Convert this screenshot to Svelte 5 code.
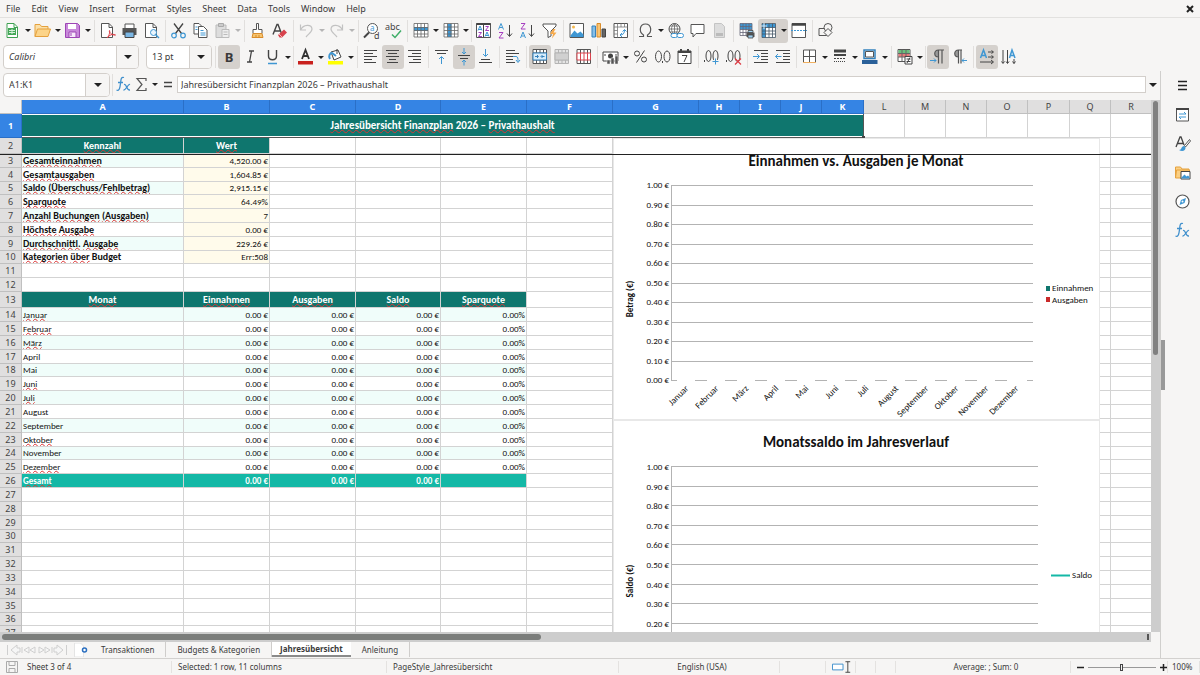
<script>
  const menus = ['File', 'Edit', 'View', 'Insert', 'Format', 'Styles', 'Sheet', 'Data', 'Tools', 'Window', 'Help'];

  const lines = (list) => `<path d="${list.map(([x, y, w]) => `M${x} ${y}h${w}`).join('')}" stroke="#444" fill="none"/>`;

  const icons = {
    new: `<path d="M3 1.500h7l3.500 3.500v10.500h-10.500z" fill="#fff" stroke="#3fa152"/><path d="M10 1.500v4h4" fill="none" stroke="#3fa152"/><path d="M4 6h8v7h-8z" fill="#43a857"/><path d="M5 8.500h6M5 10.500h6M8 7v5" stroke="#d5f0da"/>`,
    open: `<path d="M1 14.500v-12h5l1.500 2h6.500v3" fill="#fbe0a8" stroke="#e5a13d"/><path d="M1 14.500l2.500-7.500h13l-2.500 7.500z" fill="#fcd489" stroke="#e5a13d"/>`,
    save: `<path d="M1.500 1.500h12l2 2v12h-14z" fill="#c888da" stroke="#9d45b5"/><path d="M4 2h8v5h-8z" fill="#fff"/><path d="M5 10h7v5.500h-7z" fill="#f7e9fb" stroke="#9d45b5"/><path d="M7 11v3" stroke="#9d45b5"/>`,
    pdf: `<path d="M2.500 1.500h7.500l3.500 3.500v10.500h-11z" fill="#fff" stroke="#555"/><path d="M10 1.500v4h3.500" fill="none" stroke="#555"/><path d="M8 16c3-3 3-8 2.500-7.500c-1 1 2 5 6 4.500c-3-1.500-6 0-8.500 3" fill="none" stroke="#dd3b44"/>`,
    print: `<path d="M4 6v-4h9v4" fill="#fff" stroke="#555"/><path d="M1.500 6h14v7h-14z" fill="#555"/><path d="M4 10h9v5.500h-9z" fill="#7cb7e4" stroke="#444"/>`,
    preview: `<path d="M2.500 1.500h7.500l3.500 3.500v10.500h-11z" fill="#fff" stroke="#555"/><path d="M10 1.500v4h3.500" fill="none" stroke="#555"/><circle cx="10.500" cy="10.500" r="3" fill="#eaf5fd" stroke="#3f97d3"/><path d="M12.500 12.500l3.500 3.500" stroke="#3f97d3" stroke-width="1.500"/>`,
    cut: `<path d="M4 1.500l7.500 10M13 1.500l-7.500 10" stroke="#444" stroke-width="1.300"/><circle cx="4" cy="13.500" r="2.300" fill="none" stroke="#3f97d3" stroke-width="1.200"/><circle cx="13" cy="13.500" r="2.300" fill="none" stroke="#3f97d3" stroke-width="1.200"/>`,
    copy: `<path d="M2 1.500h5l3 3v7.500h-8z" fill="#fff" stroke="#555"/><path d="M6.500 4.500h5l3.500 3.500v7.500h-8.500z" fill="#fff" stroke="#555"/><path d="M3.500 5h2M3.500 7.500h2M8.500 8.500h3M8.500 11h5M8.500 13h5" stroke="#3f97d3"/>`,
    paste: `<path d="M2 3h10v12.500h-10z" fill="#ddd" stroke="#bbb"/><path d="M4.500 1.500h5v3h-5z" fill="#ccc" stroke="#aaa"/><path d="M8 7.500h7v8h-7z" fill="#eee" stroke="#bbb"/><path d="M9.500 10h4M9.500 12.500h4" stroke="#bbb"/>`,
    brush: `<path d="M7.500 1.500h2v6h3.500v4h-9v-4h3.500z" fill="#fff" stroke="#555"/><path d="M4 11.500h9l1 4h-11z" fill="#f6c46f" stroke="#d98c2b"/><path d="M7 13v2M10 13v2" stroke="#d98c2b"/>`,
    clear: `<path d="M2 12.500l4-10h1l3.500 9M3.500 9h6" fill="none" stroke="#444" stroke-width="1.400"/><path d="M7 13l6-5.500l3 3l-5 5h-2.500z" fill="#d8434d"/><path d="M8 12l3 3" stroke="#f6b4b8"/>`,
    undo: `<path d="M2.500 2.500v5.500h5.500M2.500 8c3-6 11-6 11.500-1c0 3-3 4.500-6 8" fill="none" stroke="#c2c2c2" stroke-width="1.200"/>`,
    redo: `<path d="M14.500 2.500v5.500h-5.500M14.500 8c-3-6-11-6-11.500-1c0 3 3 4.500 6 8" fill="none" stroke="#c2c2c2" stroke-width="1.200"/>`,
    find: `<circle cx="9.500" cy="6.500" r="5" fill="#fff" stroke="#555"/><path d="M6 10.500l-5 5" stroke="#444" stroke-width="2"/><text x="7" y="9" font-size="8" fill="#3f97d3">a</text><text x="11" y="16.500" font-size="9" fill="#444">d</text>`,
    spell: `<text x="0" y="8" font-size="9" fill="#444">abc</text><path d="M7 12.500l3 3l6-7" fill="none" stroke="#3fae68" stroke-width="1.500"/>`,
    row: `<path d="M2 2h14v13h-14z" fill="#fff"/><path d="M2 5h14v4h-14z" fill="#3f97d3"/><path d="M2 1.500h14v13.500h-14zM2 5.500h14M2 8.500h14M2 12h14M5.500 1.500v13.500M9 1.500v13.500M12.500 1.500v13.500" fill="none" stroke="#666" stroke-width=".8"/>`,
    col: `<path d="M2 2h14v13h-14z" fill="#fff"/><path d="M5.500 2h4v13h-4z" fill="#3f97d3"/><path d="M2 1.500h14v13.500h-14zM2 5h14M2 8.500h14M2 12h14M5.500 1.500v13.500M9 1.500v13.500M12.500 1.500v13.500" fill="none" stroke="#666" stroke-width=".8"/>`,
    sort: `<path d="M1.500 1.500h14v14h-14z" fill="#fff" stroke="#555"/><path d="M1.500 2h14" stroke="#444" stroke-width="2"/><path d="M8.500 2v13" stroke="#444"/><path d="M3 8.500l2-4.500l2 4.500M3.500 7.500h3M10 14.500l2-4.500l2 4.500M10.500 13.500h3" fill="none" stroke="#3f97d3"/><path d="M3.500 10.500h3l-3 4h3.500M10.500 4.500h3l-3 4h3.500" fill="none" stroke="#a63fc0"/>`,
    az: `<path d="M1.500 7.500l2.500-6l2.500 6M2.500 5.500h3" fill="none" stroke="#3f97d3"/><path d="M2 10.500h4l-4 5.500h4.500" fill="none" stroke="#a63fc0"/><path d="M12.500 3v11M10 11.500l2.500 3l2.500-3" fill="none" stroke="#444"/>`,
    za: `<path d="M1.500 16l2.500-6l2.500 6M2.500 14h3" fill="none" stroke="#3f97d3"/><path d="M2 1.500h4l-4 5.500h4.500" fill="none" stroke="#a63fc0"/><path d="M12.500 3v11M10 11.500l2.500 3l2.500-3" fill="none" stroke="#444"/>`,
    filter: `<path d="M2 2h13v2l-5 5v5l-3 1.500v-6.500l-5-5z" fill="#fff" stroke="#555"/><path d="M12 7l-3 5h3l-1 4.500l4.500-6h-3l2-3.500z" fill="#f5a94b"/>`,
    image: `<path d="M2 1.500h13.500v14h-13.500z" fill="#fff" stroke="#555"/><path d="M2.500 13.500l4-5l3 3l3-2l3 3v2.500h-13z" fill="#3f97d3"/><circle cx="5.500" cy="5" r="1.500" fill="#f5b84b"/>`,
    chart: `<path d="M2 4h3.500v11h-3.500z" fill="#86bfe8" stroke="#3582bd"/><path d="M7 1.500h3.500v13.500h-3.500z" fill="#f9c574" stroke="#d98c2b"/><path d="M12 7h3.500v8h-3.500z" fill="#666" stroke="#444"/>`,
    pivot: `<path d="M2 1.500h13.500v14h-13.500z" fill="#fff" stroke="#555"/><path d="M2 5h13.500M5.500 1.500v14M9 1.500v3.500M12.500 1.500v3.500M2 8.500h3.500M2 12h3.500" stroke="#777" stroke-width=".8"/><path d="M8 13c3 0 4.500-1.500 4.500-5M8 13l2-2M8 13l2 2M12.500 7.500l-2 2M12.500 7.500l2 2" fill="none" stroke="#3f97d3"/>`,
    omega: `<path d="M2 14.500h4.500v-1.500c-5-3-4-11 2-11s7 8 2 11v1.500h4.500" fill="none" stroke="#555" stroke-width="1.200"/>`,
    link: `<circle cx="7.500" cy="7" r="5.500" fill="#fff" stroke="#555"/><path d="M2 7h11M7.500 1.500v11M3 4h9M3 10h9M7.500 1.500c-4 3-4 8 0 11M7.500 1.500c4 3 4 8 0 11" fill="none" stroke="#666" stroke-width=".8"/><rect x="4" y="11.500" width="6.500" height="4" rx="2" fill="#fff" stroke="#3f97d3"/><rect x="10" y="11.500" width="6.500" height="4" rx="2" fill="#fff" stroke="#3f97d3"/>`,
    comment: `<path d="M2 2.500h13v9h-8l-3 3.500v-3.500h-2z" fill="#fff" stroke="#555"/>`,
    header: `<path d="M3.500 1.500h7l3 3v11h-10z" fill="#ddd" stroke="#c4c4c4"/><path d="M5 11h7v3h-7z" fill="#bbb"/>`,
    area: `<path d="M2 1.500h12v12h-12z" fill="#fff"/><path d="M2 1.500h12v6h-12z" fill="#3f97d3"/><path d="M2 1.500h12v12h-12zM2 4.500h12M2 7.500h12M2 10.500h12M5 1.500v12M8 1.500v12M11 1.500v12" fill="none" stroke="#667" stroke-width=".8"/><path d="M8.500 10.500h8v4.500h-8z" fill="#555"/><path d="M10 8.500h5v2h-5zM10 13h5v3h-5z" fill="#9fd0f0" stroke="#444" stroke-width=".8"/>`,
    freeze: `<path d="M2 2h13.500v13.500h-13.500z" fill="#fff"/><path d="M2 2h13.500v3.500h-10v10h-3.500z" fill="#3f97d3"/><path d="M2 1.500h13.500v14h-13.500zM2 5.500h13.500M2 9h13.500M2 12h13.500M5.500 1.500v14M9 1.500v14M12.500 1.500v14" fill="none" stroke="#456" stroke-width=".8"/><path d="M1 4h6M4 1v6" stroke="#cfe6f7"/>`,
    split: `<path d="M2 1.500h13.500v14h-13.500z" fill="#fff" stroke="#555"/><path d="M2 2.500h14" stroke="#444" stroke-width="2.500"/><path d="M1 8.500h16" stroke="#3f97d3" stroke-dasharray="2 1"/>`,
    shapes: `<path d="M2 6.500h7.500v7h-7.500z" fill="none" stroke="#555"/><circle cx="11" cy="5.500" r="4" fill="#f6f5f4" stroke="#555"/><path d="M11 6.500l4 4l-4 4l-4-4z" fill="#f6f5f4" stroke="#555"/>`,
    italic: `<path d="M7 3h5M5 14h5M9.500 3l-2 11" fill="none" stroke="#444" stroke-width="1.300"/>`,
    under: `<path d="M4.500 2v6c0 5 8 5 8 0v-6" fill="none" stroke="#444" stroke-width="1.400"/><path d="M4 15.500h9" stroke="#3f97d3" stroke-width="1.500"/>`,
    fcolor: `<path d="M5 11l3.500-9l3.500 9M6 8h5" fill="none" stroke="#333" stroke-width="1.800"/><path d="M1 13h15v3.500h-15z" fill="#c9211e"/>`,
    hilite: `<path d="M4 4l7-2l3 7l-7 3z" fill="#fff" stroke="#444"/><path d="M3 11c-2-3 0-6 2-6l4 3" fill="none" stroke="#3f97d3" stroke-width="2"/><path d="M10 1v5" stroke="#444"/><path d="M1 13h15v3.500h-15z" fill="#ffff00"/>`,
    left: lines([[2, 2.5, 13], [2, 5.5, 9], [2, 8.5, 13], [2, 11.5, 8], [2, 14.5, 12]]),
    center: lines([[2, 2.5, 13], [4, 5.5, 9], [2, 8.5, 13], [5, 11.5, 7], [3, 14.5, 11]]),
    right: lines([[2, 2.5, 13], [6, 5.5, 9], [2, 8.5, 13], [7, 11.5, 8], [3, 14.5, 12]]),
    top: `${lines([[2, 2.5, 13], [4, 5.5, 9]])}<path d="M8.500 16v-7M6 11l2.500-2.500l2.500 2.500" fill="none" stroke="#3f97d3"/>`,
    middle: `${lines([[3, 7.5, 12], [5, 10.5, 8]])}<path d="M9 0v5.500M7 4l2 2l2-2M9 17.500v-5M7 14l2-2l2 2" fill="none" stroke="#3f97d3"/>`,
    bottom: `${lines([[2, 14.5, 13], [4, 11.5, 9]])}<path d="M8.500 1v7M6 6l2.500 2.500l2.500-2.500" fill="none" stroke="#3f97d3"/>`,
    wrap: `${lines([[2, 2.5, 9], [2, 5.5, 13], [2, 8.5, 7], [2, 11.5, 7], [2, 14.5, 9]])}<path d="M9 8.500h3c2 0 2 2 2 5M12 12l2 2.500l2-2.500" fill="none" stroke="#3f97d3"/>`,
    merge: `<path d="M2 2h14v13h-14z" fill="#fff"/><path d="M2 1.500h13.500v14h-13.500zM2 5h13.500M2 12h13.500M5.500 1.500v3.500M9 1.500v3.500M12.500 1.500v3.500M5.500 12v3.500M9 12v3.500M12.500 12v3.500" fill="none" stroke="#555"/><path d="M2 5h13.500v7h-13.500z" fill="#d7ecfa" stroke="#3582bd"/><path d="M4 8.500h3M10.500 8.500h3M6 7l1.500 1.500l-1.500 1.500M11.500 7l-1.500 1.500l1.500 1.500" fill="none" stroke="#3582bd"/>`,
    merge2: `<path d="M2 1.500h13.500v14h-13.500zM2 5h13.500M2 12h13.500M5.500 1.500v3.500M9 1.500v3.500M12.500 1.500v3.500M5.500 12v3.500M9 12v3.500M12.500 12v3.500" fill="#e4e4e4" stroke="#b4b4b4"/><path d="M2 5h13.500v7h-13.500z" fill="#d0d0d0" stroke="#b4b4b4"/>`,
    unmerge: `<path d="M2 1.500h13.500v14h-13.500zM5.500 1.500v14M9 1.500v14M12.500 1.500v14" fill="#fff" stroke="#555"/><path d="M2 5h13.500v7h-13.500zM5.500 5v7M9 5v7M12.500 5v7" fill="#fff" stroke="#d8434d"/>`,
    currency: `<path d="M1 4h15v9h-15z" fill="#fff" stroke="#444"/><circle cx="8.500" cy="8" r="2.500" fill="#444"/><path d="M3 6v2M14 6v2" stroke="#444"/><path d="M5 12h3v4h-3zM9 10h3v6h-3zM13 8h3v8h-3z" fill="#555" stroke="#eee" stroke-width=".5"/>`,
    percent: `<circle cx="5" cy="5.500" r="2.500" fill="none" stroke="#444"/><circle cx="12" cy="11.500" r="2.500" fill="none" stroke="#444"/><path d="M12.500 2.500l-8 12" stroke="#444"/>`,
    number: `<ellipse cx="4.500" cy="8.500" rx="3" ry="5.500" fill="none" stroke="#444"/><ellipse cx="13" cy="8.500" rx="3" ry="5.500" fill="none" stroke="#444"/><path d="M8.500 13v2" stroke="#444"/>`,
    date: `<path d="M2 3h13v12.500h-13z" fill="#fff" stroke="#444"/><path d="M2 4h13M5 1v3M12 1v3" stroke="#444" stroke-width="2"/><path d="M6 7.500h5l-3 6.500" fill="none" stroke="#444"/>`,
    adddec: `<ellipse cx="5.500" cy="8" rx="2.500" ry="5.500" fill="none" stroke="#444"/><ellipse cx="12.500" cy="8" rx="2.500" ry="5.500" fill="none" stroke="#444"/><path d="M1.500 12v2" stroke="#444"/><path d="M9 13.500h7M12.500 10v7" stroke="#f6f5f4" stroke-width="3"/><path d="M9.500 13.500h6M12.500 10.500v6" stroke="#3f97d3"/>`,
    deldec: `<ellipse cx="5.500" cy="8" rx="2.500" ry="5.500" fill="none" stroke="#444"/><ellipse cx="12.500" cy="8" rx="2.500" ry="5.500" fill="none" stroke="#444"/><path d="M1.500 12v2" stroke="#444"/><path d="M10 10.500l6 6M16 10.500l-6 6" stroke="#dd3b44" stroke-width="1.200"/>`,
    indent: `${lines([[2, 2.5, 14], [9, 5.5, 7], [9, 8.5, 7], [9, 11.5, 7], [2, 14.5, 14]])}<path d="M1 8.500h6M5 6l2.500 2.500l-2.500 2.500" fill="none" stroke="#3f97d3"/>`,
    outdent: `${lines([[2, 2.5, 14], [9, 5.5, 7], [9, 8.5, 7], [9, 11.5, 7], [2, 14.5, 14]])}<path d="M7.500 8.500h-6M4 6l-2.500 2.500l2.500 2.500" fill="none" stroke="#3f97d3"/>`,
    borders: `<path d="M2.500 2h12v12.500h-12zM8.500 2v12.500M2.500 8.500h12" fill="#fff" stroke="#555"/><path d="M2 14.500h13" stroke="#f0b060"/>`,
    lstyle: `<path d="M3 3h12" stroke="#444" stroke-width="3"/><path d="M3 7h12" stroke="#444" stroke-width="2"/><path d="M3 10.500h12" stroke="#444" stroke-dasharray="2 1"/><path d="M3 13.500h12" stroke="#444" stroke-dasharray="1 1"/>`,
    lcolor: `<path d="M3 2h11v8.500h-11z" fill="#fff" stroke="#3582bd" stroke-width="1.500"/><path d="M4.500 3.500h8v5.500h-8z" fill="none" stroke="#555"/><path d="M1 12h15.500v4h-15.500z" fill="#2a6099"/>`,
    cond: `<path d="M2 1.500h12v12h-12z" fill="#fff" stroke="#555"/><path d="M2.500 2h11v3h-11z" fill="#68c27c"/><path d="M2.500 5.500h11v3.500h-11z" fill="#e87a7a"/><path d="M2 5.500h12M2 9h12M6 1.500v12M10 1.500v12" stroke="#666"/><path d="M9 8.500h7v7.500h-7z" fill="#fff" stroke="#444"/><path d="M10.500 11h4M10.500 13.500h4M11 15l3-5.500" stroke="#444"/>`,
    ltr: `<path d="M9.500 9c-5 0-5-7 0-7z" fill="#999"/><path d="M15 2h-5.500c-5 0-5 7 0 7M9.500 2v13.500M13 2v13.500" fill="none" stroke="#555" stroke-width="1.200"/><path d="M1 12.500h6M5 10.500l2 2l-2 2" fill="none" stroke="#3f97d3"/>`,
    rtl: `<path d="M7.500 9c-5 0-5-7 0-7z" fill="#999"/><path d="M11 2h-3.500c-5 0-5 7 0 7M7.500 2v13.500M10 2v13.500" fill="none" stroke="#555" stroke-width="1.200"/><path d="M16 12.500h-5M13 10.500l-2 2l2 2" fill="none" stroke="#3f97d3"/>`,
    dirh: `<path d="M2.500 10l3-8l3 8M3.500 7.500h4" fill="none" stroke="#3f97d3" stroke-width="1.500"/><path d="M10 4h5M10 9h5M2 14h13M13.500 2.500l2 1.500l-2 1.500M13.500 7.500l2 1.500l-2 1.500M13 12l2.500 2l-2.500 2" fill="none" stroke="#444"/>`,
    dirv: `<path d="M9.500 10l2.500-8l3 8M10.500 7.500h4" fill="none" stroke="#3f97d3" stroke-width="1.500"/><path d="M3 2v13M7.500 2v13M14 11v4.500M1.500 13.500l1.500 2l1.500-2M6 13.500l1.500 2l1.500-2M12.500 13.500l1.500 2l1.500-2" fill="none" stroke="#444"/>`,
    fx: `<path d="M9 1.500c-3-1-3 2-3.500 6c-.5 4-1 8-4 6.500M3 6.500h5" fill="none" stroke="#3f8fcc" stroke-width="1.300"/><path d="M9 8.500c3-1 2 6 6 5.500M15 8.500c-2-1-4 6-6.500 5.500" fill="none" stroke="#3f8fcc" stroke-width="1.300"/>`,
    sigma: `<path d="M13 5v-2.500h-9l5 6l-5 6h9v-2.500" fill="none" stroke="#555" stroke-width="1.200"/>`,
    equal: `<path d="M5 6.500h8M5 10.500h8" stroke="#444" stroke-width="1.500"/>`,
    burger: `<path d="M4 4.500h9M4 8.500h9M4 12.500h9" stroke="#222" stroke-width="1.300"/>`,
    props: `<path d="M2.500 2.500h12v12.500h-12z" fill="#fff" stroke="#555"/><path d="M2 3h13" stroke="#444" stroke-width="2"/><path d="M5 8h7M5 11h7M10 6l2 2M7 13l-2-2" stroke="#3f97d3"/>`,
    styles: `<path d="M2 12l4-10h1l3 8M3.500 8.500h5.500" fill="none" stroke="#444" stroke-width="1.300"/><path d="M15.500 4.500l-5 6l1 1.500l5-6z" fill="#fff" stroke="#555"/><path d="M10 11c-3 0-2 4-5 4c3 2 7 1 6.500-3z" fill="#3f97d3"/>`,
    gallery: `<path d="M1.500 14v-11h5l1.500 2h7v2" fill="#fbd084" stroke="#e5a13d"/><path d="M1.500 14l1-8h13v8z" fill="#fbd084" stroke="#e5a13d"/><path d="M7 7.500h9v7.500h-9z" fill="#fff" stroke="#444"/><path d="M7.500 13.500l3-3l2 2l1.500-1l1.500 1.500v1.500h-8z" fill="#3f97d3"/>`,
    nav: `<circle cx="8.500" cy="8.500" r="6.500" fill="#fff" stroke="#555" stroke-width="1.200"/><path d="M12 5l-1.500 5l-5 2l1.500-5z" fill="#3f97d3"/><circle cx="8.500" cy="8.500" r="1" fill="#fff"/>`
  };

  const bar1 = [
    ['new', 'd'], ['open', 'd'], ['save', 'd'], '|', ['pdf'], ['print'], ['preview'], '|', ['cut'], ['copy'], ['paste', 'dg'], '|',
    ['brush'], ['clear'], '|', ['undo', 'dg'], ['redo', 'dg'], '|', ['find'], ['spell'], '|', ['row', 'd'], ['col', 'd'], '!',
    ['sort'], ['az'], ['za'], ['filter'], '|', ['image'], ['chart'], ['pivot'], '!', ['omega', 'd'], ['link'], ['comment'], ['header'], '|',
    ['area'], ['freeze', 'da'], ['split'], '|', ['shapes']
  ];
  const bar2 = [
    ['bold', 'a'], ['italic'], ['under', 'd'], '!', ['fcolor', 'd'], ['hilite', 'd'], '|', ['left'], ['center', 'a'], ['right'], '|',
    ['top'], ['middle', 'a'], ['bottom'], '|', ['wrap'], '|', ['merge', 'a'], ['merge2'], ['unmerge'], '|', ['currency', 'd'], ['percent'], ['number'], ['date'], '|',
    ['adddec'], ['deldec'], '|', ['indent'], ['outdent'], '|', ['borders', 'd'], ['lstyle', 'd'], ['lcolor', 'd'], '|', ['cond', 'd'], '!',
    ['ltr', 'a'], ['rtl'], '|', ['dirh', 'a'], ['dirv']
  ];

  // Column letters with their widths
  const wide = { A: 162, B: 86, C: 86, D: 85, E: 86, F: 86, G: 86, K: 42, P: 42 };
  const cols = 'ABCDEFGHIJKLMNOPQRSTUVWXYZ'.split('').map((name, i) => ({ name, selected: i < 11, width: wide[name] ?? 41 }));

  // A leading ~ marks a word the spell checker underlines
  const kpis = [
    ['~Gesamteinnahmen', '4,520.00 €'],
    ['~Gesamtausgaben', '1,604.85 €'],
    ['~Saldo ~(Überschuss/Fehlbetrag)', '2,915.15 €'],
    ['~Sparquote', '64.49%'],
    ['~Anzahl ~Buchungen ~(Ausgaben)', '7'],
    ['~Höchste ~Ausgabe', '0.00 €'],
    ['~Durchschnittl. ~Ausgabe', '229.26 €'],
    ['~Kategorien ~über Budget', 'Err:508']
  ];
  const months = ['~Januar', '~Februar', '~März', 'April', 'Mai', '~Juni', '~Juli', 'August', 'September', '~Oktober', 'November', '~Dezember'];
  const monthNames = months.map((m) => m.replace('~', ''));
  const shortRows = [5, 10, 18, 24, 30, 36];

  function cellsOf(n) {
    if (n === 2) return [['~Kennzahl', 'head'], ['~Wert', 'head']];
    if (n >= 3 && n <= 10) return [[kpis[n - 3][0], n % 2 ? 'label mint' : 'label'], [kpis[n - 3][1], 'num cream']];
    if (n === 13) return ['~Monat', '~Einnahmen', '~Ausgaben', '~Saldo', '~Sparquote'].map((t) => [t, 'head']);
    if (n >= 14 && n <= 25) {
      const tint = n % 2 ? '' : ' mint';
      return [[months[n - 14], 'month' + tint], ...['0.00 €', '0.00 €', '0.00 €', '0.00%'].map((t) => [t, 'num' + tint])];
    }
    if (n === 26) return [['~Gesamt', 'total'], ['0.00 €', 'total num'], ['0.00 €', 'total num'], ['0.00 €', 'total num'], ['', 'total']];
    return [];
  }
  const rows = Array.from({ length: 69 }, (_, i) => {
    const n = i + 2;
    const cells = cellsOf(n);
    return { n, cells, blanks: cols.slice(cells.length) };
  });
  const words = (text) => text.split(' ').map((w) => ({ bad: w[0] === '~', text: w.replace('~', '') }));
  const ticks = Array.from({ length: 11 }, (_, i) => ({ label: `${(1 - i / 10).toFixed(2)} €`, step: i }));

  let zoom = $state(49);
</script>

{#snippet icon(name)}
  <svg class="icon" width="18" height="18" viewBox="0 0 18 18" aria-hidden="true">{@html icons[name]}</svg>
{/snippet}

{#snippet tools(items)}
  {#each items as item}
    {#if item === '|' || item === '!'}
      <span class="sep" class:tight={item === '!'}></span>
    {:else}
      <span class="tool" class:active={item[1]?.includes('a')} class:gray={item[1]?.includes('g')}>
        <button class="btn" aria-label={item[0]}>
          {#if item[0] === 'bold'}<b>B</b>{:else}{@render icon(item[0])}{/if}
        </button>
        {#if item[1]?.includes('d')}<button class="drop" aria-label={item[0] + ' menu'}><i class="caret"></i></button>{/if}
      </span>
    {/if}
  {/each}
{/snippet}

{#snippet spelled(text)}
  {#each words(text) as w, i}{i ? ' ' : ''}{#if w.bad}<span class="bad">{w.text}</span>{:else}{w.text}{/if}{/each}
{/snippet}

<div class="app">
  <nav class="menu">
    {#each menus as m}<button>{m}</button>{/each}
    <button class="close" aria-label="Close document">
      <svg width="8" height="8" viewBox="0 0 8 8"><path d="M1 1l6 6M7 1l-6 6" stroke="#222" stroke-width="2" /></svg>
    </button>
  </nav>
  <div class="toolbar">{@render tools(bar1)}</div>
  <div class="toolbar second">
    <div class="combo font"><input value="Calibri" aria-label="Font name" /><button aria-label="Choose font"><i class="caret big"></i></button></div>
    <div class="combo size"><input value="13 pt" aria-label="Font size" /><button aria-label="Choose size"><i class="caret big"></i></button></div>
    <span class="sep"></span>
    {@render tools(bar2)}
  </div>

  <div class="body">
    <main>
      <div class="formula">
        <div class="combo name"><input value="A1:K1" aria-label="Name box" /><button aria-label="Choose range"><i class="caret big"></i></button></div>
        <span class="sep"></span>
        <button class="btn narrow" aria-label="Function wizard">{@render icon('fx')}</button>
        <button class="btn narrow" aria-label="Sum">{@render icon('sigma')}</button>
        <button class="drop" aria-label="Sum menu"><i class="caret"></i></button>
        <button class="btn narrow" aria-label="Formula">{@render icon('equal')}</button>
        <input class="line" value="Jahresübersicht Finanzplan 2026 – Privathaushalt" aria-label="Input line" />
        <button class="drop expand" aria-label="Expand formula bar"><i class="caret big"></i></button>
      </div>

      <div class="pane">
        <div class="sheet">
          <table>
            <colgroup>
              <col class="rowhead" />
              {#each cols as c}<col style="width: {c.width}px" />{/each}
            </colgroup>
            <thead>
              <tr>
                <th class="corner"></th>
                {#each cols as c}<th class:selected={c.selected}>{c.name}</th>{/each}
              </tr>
            </thead>
            <tbody>
              <tr class="first">
                <th class="selected">1</th>
                <td class="title" colspan="11">{@render spelled('~Jahresübersicht ~Finanzplan 2026 – ~Privathaushalt')}<i class="handle"></i></td>
                {#each cols.slice(11) as c (c.name)}<td></td>{/each}
              </tr>
              {#each rows as r (r.n)}
                <tr class:tall={r.n === 2 || r.n === 13} class:short={shortRows.includes(r.n)}>
                  <th>{r.n}</th>
                  {#each r.cells as [text, kind]}<td class={kind}>{@render spelled(text)}</td>{/each}
                  {#each r.blanks as c (c.name)}<td></td>{/each}
                </tr>
              {/each}
            </tbody>
          </table>

          <svg class="plot one" width="487" height="282" viewBox="0 0 487 282">
            <rect x=".5" y=".5" width="486" height="281" fill="#fff" stroke="#e8e8e8" />
            <text class="heading" x="243" y="28">Einnahmen vs. Ausgaben je Monat</text>
            {#each ticks as t}
              <text class="tick" x="56" y={50 + Math.round(t.step * 19.5)}>{t.label}</text>
              {#if t.step < 10}<path d="M58 {47.5 + Math.round(t.step * 19.5)}h362" />{/if}
            {/each}
            <path d="M58.500 47v196" />
            <path d="M58 242.500h6M420 242.500h-6" />
            {#each monthNames as m, i}
              {#if i}<path d="M{52 + i * 30} 242.500h12" />{/if}
              <text class="month" transform="translate({76 + i * 30} 251) rotate(-45)">{m}</text>
            {/each}
            <text class="axis" transform="translate(20 161) rotate(-90)">Betrag (€)</text>
            <path class="green" d="M433 148h4v5h-4z" />
            <path class="red" d="M433 159h4v5h-4z" />
            <text x="439" y="153">Einnahmen</text>
            <text x="439" y="165">Ausgaben</text>
          </svg>
          <svg class="plot two" width="487" height="282" viewBox="0 0 487 282">
            <rect x=".5" y=".5" width="486" height="281" fill="#fff" stroke="#e8e8e8" />
            <text class="heading" x="243" y="27">Monatssaldo im Jahresverlauf</text>
            {#each ticks as t}
              <text class="tick" x="56" y={50 + Math.round(t.step * 19.6)}>{t.label}</text>
              <path d="M58 {46.5 + Math.round(t.step * 19.6)}h367" />
            {/each}
            <path d="M58.500 46v196" />
            <text class="axis" transform="translate(20 161) rotate(-90)">Saldo (€)</text>
            <path class="teal" d="M438 155.500h19" />
            <text x="459" y="158">Saldo</text>
          </svg>
          <div class="freeze"></div>
        </div>
        <div class="vscroll"><i></i></div>
      </div>
      <div class="hscroll"><i></i><b></b></div>

      <div class="tabs">
        <svg class="jump" width="62" height="12" viewBox="0 0 62 12" fill="#f6f6f6" stroke="#cfcfcf">
          <path d="M1.500 1v10M11 1l-6 5l6 5v-3h3v-4h-3zM16 3v6M23 3l-5 3l5 3zM29 3l-5 3l5 3zM33 3l5 3l-5 3zM39 3l5 3l-5 3zM46 3v6M51 1l6 5l-6 5v-3h-3v-4h3zM60.500 1v10" />
        </svg>
        <button class="add" aria-label="Add sheet">
          <svg width="14" height="14" viewBox="0 0 14 14"><path d="M.5 0h6l3 3v11h-9z" fill="#fff" stroke="#e4e4e4" /><circle cx="10.500" cy="7" r="2" fill="#fff" stroke="#2a6fc0" stroke-width="1.500" /></svg>
        </button>
        <button class="tab">Transaktionen</button>
        <button class="tab">Budgets &amp; Kategorien</button>
        <button class="tab current">Jahresübersicht</button>
        <button class="tab last">Anleitung</button>
      </div>
    </main>
    <div class="splitter"><i></i></div>
    <aside>
      {#each ['burger', 'props', 'styles', 'gallery', 'nav', 'fx'] as s}
        <button aria-label={s}>{@render icon(s)}</button>
      {/each}
    </aside>
  </div>

  <footer>
    <svg class="disk" width="12" height="12" viewBox="0 0 12 12" fill="none" stroke="#aaa"><path d="M.5.500h11v11h-11zM3 .500v4h6v-4M3 11.500v-4h6v4" /></svg>
    <span class="s1">Sheet 3 of 4</span>
    <span class="s2">Selected: 1 row, 11 columns</span>
    <span class="s3">PageStyle_Jahresübersicht</span>
    <span class="s4">English (USA)</span>
    <span class="s5"></span>
    <span class="s6">
      <svg width="24" height="12" viewBox="0 0 24 12" fill="none"><path d="M.500 3h11v6h-11z" fill="#fff" stroke="#3f8fcc" /><path d="M14 .500h5M14 11.500h5M16.500 .500v11" stroke="#444" /></svg>
    </span>
    <span class="s7"></span><span class="s7"></span>
    <span class="s8">Average: ; Sum: 0</span>
    <span class="s9">
      <button aria-label="Zoom out"><svg width="7" height="7" viewBox="0 0 7 7"><path d="M0 3.500h7" stroke="#222" stroke-width="1.500" /></svg></button>
      <input type="range" min="0" max="100" bind:value={zoom} aria-label="Zoom" />
      <button aria-label="Zoom in"><svg width="7" height="7" viewBox="0 0 7 7"><path d="M0 3.500h7M3.500 0v7" stroke="#222" stroke-width="1.500" /></svg></button>
    </span>
    <span class="s10">100%</span>
  </footer>
</div>

<style>
  :global(body) { margin: 0; }
  .app {
    display: flex; flex-direction: column; height: 100vh; overflow: hidden;
    background: #f6f5f4; color: #3a3a3a; font: 9px/12px "Noto Sans", sans-serif;
  }
  button { border: 0; padding: 0; margin: 0; background: none; font: inherit; color: inherit; display: flex; align-items: center; justify-content: center; }
  input { border: 0; margin: 0; background: none; font: inherit; color: inherit; min-width: 0; }
  .icon { display: block; flex: none; overflow: visible; }
  .icon :global(text) { font-family: "Noto Sans", sans-serif; }

  .menu { display: flex; align-items: center; gap: 11px; height: 17px; padding: 0 6px; flex: none; border-bottom: 1px solid #e2e1df; }
  .close { margin-left: auto; }
  .toolbar { display: flex; align-items: center; height: 25px; flex: none; padding-left: 2px; }
  .second { height: 28px; padding-left: 3px; }
  .tool { display: flex; height: 24px; border-radius: 3px; }
  .btn { width: 22px; height: 24px; flex: none; }
  .btn b { font-size: 13px; }
  .narrow { width: 18px; }
  .drop { width: 8px; flex: none; }
  .active { background: #d5d1cd; }
  .caret { border: 3px solid transparent; border-top-color: #222; border-bottom: 0; }
  .caret.big { border-width: 4px; border-bottom: 0; }
  .gray .caret { border-top-color: #b5b5b5; }
  .sep { width: 1px; height: 22px; margin: 0 2px; background: #e1dfdd; flex: none; }
  .sep.tight { margin: 0 1px; }
  .combo { display: flex; height: 24px; box-sizing: border-box; border: 1px solid #d3cfcb; border-radius: 4px; background: #fff; overflow: hidden; }
  .combo input { flex: 1; padding: 0 5px; }
  .combo button { width: 22px; flex: none; background: #f6f5f4; border-left: 1px solid #d3cfcb; }
  .font { width: 136px; margin-right: 7px; font-style: italic; }
  .size { width: 66px; margin-right: 1px; }
  .name { width: 107px; }
  .name button { width: 24px; }

  .body { display: flex; flex: 1; min-height: 0; }
  main { display: flex; flex-direction: column; flex: 1; min-width: 0; }
  .formula { display: flex; align-items: center; height: 27px; padding: 0 0 2px 3px; flex: none; }
  .line { flex: 1; height: 17px; box-sizing: border-box; background: #fff; border: 1px solid #d3cfcb; padding: 0 3px; }
  .expand { width: 14px; }

  .pane { display: flex; flex: 1; min-height: 0; }
  .sheet { position: relative; flex: 1; min-width: 0; overflow: hidden; background: #fff; }
  table { table-layout: fixed; border-collapse: separate; border-spacing: 0; width: 0; font: 9px/12px Carlito, Lato, sans-serif; color: #111; }
  .rowhead { width: 22px; }
  th, td { box-sizing: border-box; height: 14px; padding: 0 1px; border-right: 1px solid #d3d3d3; border-bottom: 1px solid #d3d3d3; white-space: nowrap; overflow: hidden; }
  th { background: #e0dfdf; color: #444; font: 9px/12px "Noto Sans", sans-serif; border-color: #c0c0c0; }
  .short th, .short td { height: 13px; }
  .tall th, .tall td { height: 16px; }
  .first th, .first td { height: 24px; }
  th.selected { background: #3584e4; color: #fff; font-weight: bold; border-color: #2a6fc7; }
  th.corner { background: #f6f5f4; }
  td.title { position: relative; overflow: visible; background: #0f766e; color: #fff; text-align: center; font-size: 11px; font-weight: bold; border-color: #555; box-shadow: inset 0 1px #fff, inset 0 -1px #fff; }
  .handle { position: absolute; right: -2px; bottom: -2px; width: 3px; height: 3px; background: #444; }
  .head { background: #0f766e; color: #fff; font-weight: bold; font-size: 10px; text-align: center; }
  .label { font-weight: bold; font-size: 10px; }
  .mint { background: #f0fdfa; }
  .cream { background: #fffbeb; }
  .num { text-align: right; }
  .total { background: #14b8a6; color: #fff; font-weight: bold; }
  .bad { text-decoration: underline wavy #dd3333 1px; text-underline-offset: 0; text-decoration-skip-ink: none; }
  .freeze { position: absolute; left: 0; right: 0; top: 54px; height: 1px; background: #222; }

  .plot { position: absolute; left: 613px; font: 9px Carlito, Lato, sans-serif; fill: #111; }
  .one { top: 38px; }
  .two { top: 320px; }
  .plot path { stroke: #b3b3b3; fill: none; }
  .plot .green { fill: #0f766e; stroke: none; }
  .plot .red { fill: #c92a2a; stroke: none; }
  .plot .teal { stroke: #14b8a6; stroke-width: 2; }
  .heading { font-size: 15px; font-weight: bold; text-anchor: middle; }
  .tick, .plot .month { text-anchor: end; }
  .axis { font-weight: bold; text-anchor: middle; }

  .vscroll { width: 9px; background: #cdcdcd; padding: 1px 2px; box-sizing: border-box; flex: none; }
  .vscroll i { display: block; height: 48%; border-radius: 3px; background: #808080; }
  .hscroll { display: flex; justify-content: space-between; height: 10px; padding: 2px; box-sizing: border-box; margin-right: 9px; background: #cdcdcd; flex: none; }
  .hscroll i { width: 47%; border-radius: 3px; background: #7b7d7b; }
  .hscroll b { width: 2px; background: #555; }

  .tabs { display: flex; height: 16px; flex: none; font-size: 8px; }
  .jump { margin: 2px 6px 0; flex: none; }
  .add { margin-right: 2px; }
  .tab { position: relative; padding: 0 11px; height: 15px; border-right: 1px solid #cfcdcb; }
  .current { background: #fff; font-weight: bold; padding: 0 8px; border-right: 0; border-bottom: 2px solid #8a8a8a; }

  .splitter { width: 5px; border-left: 1px solid #d0cfcd; flex: none; display: flex; align-items: center; }
  .splitter i { width: 4px; height: 50px; background: #999; }
  aside { width: 34px; display: flex; flex-direction: column; align-items: center; gap: 5px; padding-top: 3px; flex: none; }
  aside button { width: 24px; height: 24px; }

  footer { display: flex; align-items: center; height: 17px; flex: none; border-top: 1px solid #d3d1cf; box-sizing: border-box; font-size: 8px; }
  footer span { box-sizing: border-box; padding-left: 6px; border-right: 1px solid #e4e2e0; height: 12px; display: flex; align-items: center; }
  .disk { margin-left: 6px; }
  .s1 { width: 153px; margin-left: 1px; padding-left: 8px; }
  .s2 { width: 215px; }
  .s3 { width: 232px; }
  .s4 { flex: 1; justify-content: center; }
  .s5 { width: 46px; }
  .s6 { width: 30px; }
  .s7 { width: 20px; }
  .s8 { width: 175px; justify-content: center; }
  .s9 { width: 97px; gap: 4px; }
  .s9 input { flex: 1; appearance: none; height: 12px; background: linear-gradient(#999, #999) center / 100% 1px no-repeat; }
  .s9 input::-webkit-slider-thumb { appearance: none; width: 3px; height: 7px; border: 1px solid #444; background: #f6f5f4; box-sizing: border-box; }
  .s10 { width: 32px; padding-left: 4px; }
</style>
